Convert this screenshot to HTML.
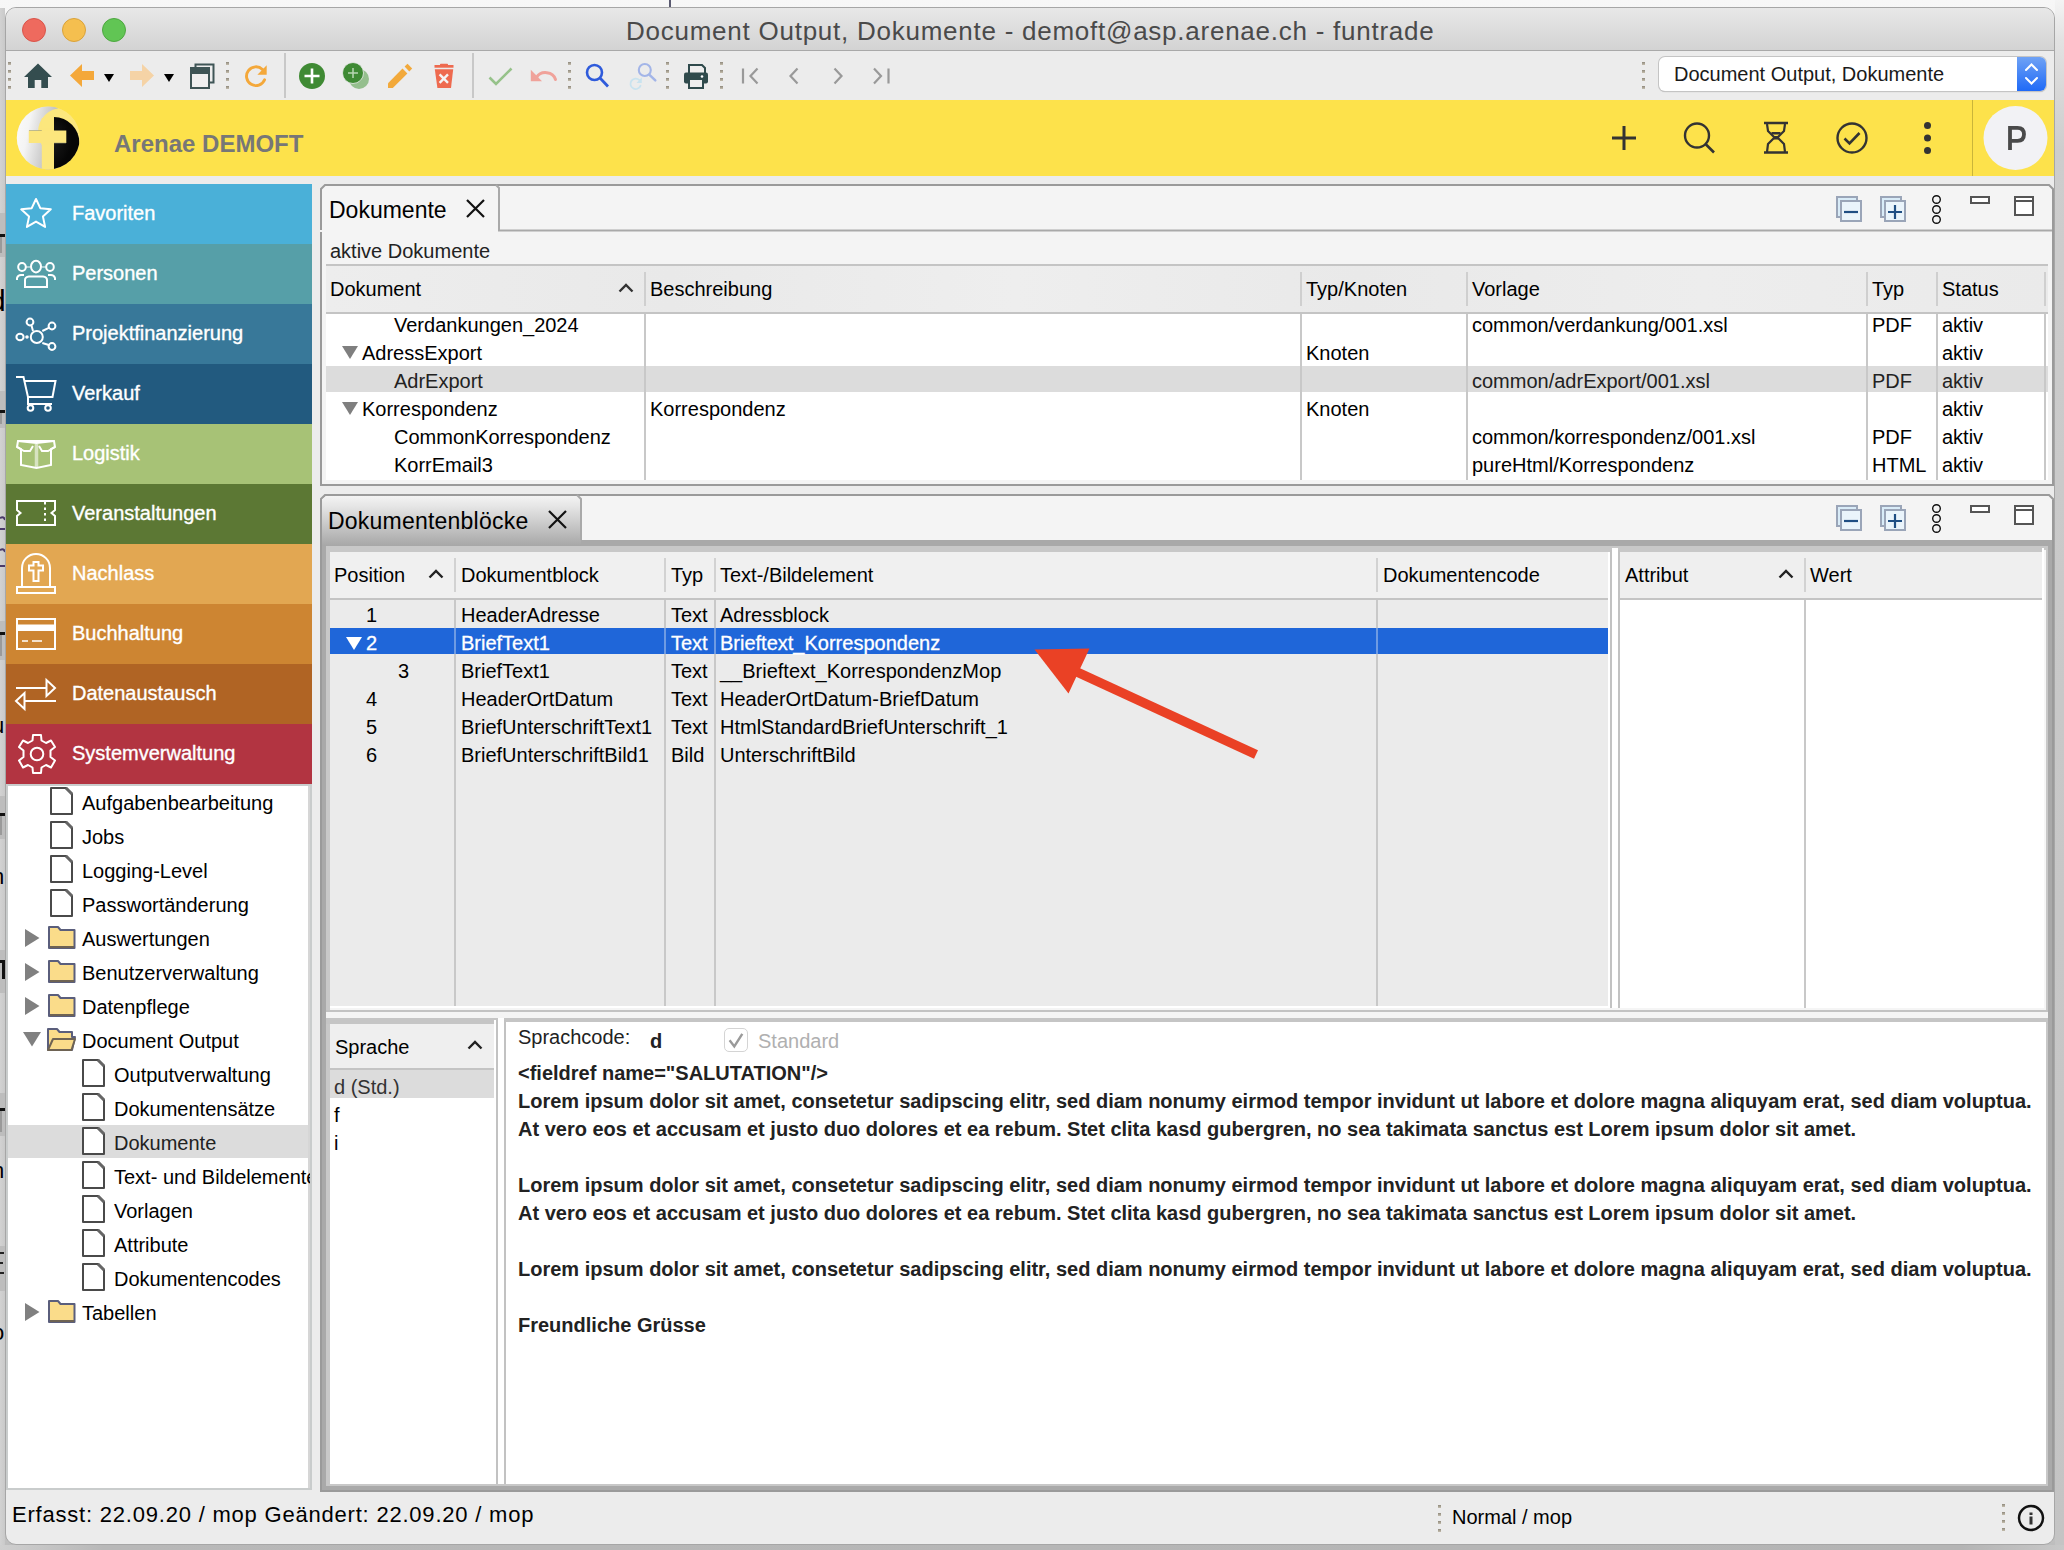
<!DOCTYPE html>
<html><head><meta charset="utf-8">
<style>
*{box-sizing:border-box;margin:0;padding:0}
html,body{width:2064px;height:1550px;overflow:hidden}
body{position:relative;background:#f6f6f6;font-family:"Liberation Sans",sans-serif;font-size:20px;color:#000}
.a{position:absolute}
.t{position:absolute;white-space:nowrap;line-height:1}
#desk{left:0;top:0;width:2064px;height:1550px;background:linear-gradient(180deg,#f7f7f7 0,#f3f3f3 50px,#d6d6d6 800px,#cdcdcd 1500px,#bcbcbc 1550px)}
#win{left:5px;top:7px;width:2050px;height:1538px;border:1px solid #a6a6a6;border-radius:11px;background:#ececec;overflow:hidden}
#titlebar{left:0;top:0;width:2048px;height:43px;background:linear-gradient(#e8e8e8,#d3d3d3);border-bottom:1px solid #a9a9a9}
.light{top:10px;width:24px;height:24px;border-radius:50%}
.grip{width:3px;height:28px;background:repeating-linear-gradient(#8f897c 0,#c4bdad 3px,transparent 3px,transparent 8px)}
.nav{left:0;width:306px;height:60px;color:#fff;font-size:20px}
.nav .t{left:66px;top:19px;-webkit-text-stroke:0.35px #fff}
.nav svg{position:absolute;left:8px;top:8px}
</style></head><body>
<div id="desk" class="a"></div>
<div class="a" style="left:669px;top:0;width:2px;height:7px;background:#5a5a70"></div>
<div class="a" style="left:0;top:0;width:5px;height:1550px;overflow:hidden"><div class="a" style="left:0px;top:8px;width:5px;height:1537px;background:linear-gradient(90deg,#d2d2d2,#c9c9c9)"></div><div class="a" style="left:0px;top:213px;width:5px;height:44px;background:#bdbdbd"></div><div class="a" style="left:0px;top:234px;width:5px;height:3px;background:#111"></div><div class="a" style="left:0px;top:237px;width:2px;height:16px;background:#9a9a9a"></div><div class="a" style="left:0px;top:391px;width:5px;height:37px;background:#bdbdbd"></div><div class="a" style="left:0px;top:410px;width:5px;height:3px;background:#111"></div><div class="a" style="left:0px;top:413px;width:2px;height:11px;background:#9a9a9a"></div><div class="a" style="left:0px;top:621px;width:5px;height:39px;background:#bdbdbd"></div><div class="a" style="left:0px;top:632px;width:5px;height:3px;background:#111"></div><div class="a" style="left:0px;top:635px;width:2px;height:21px;background:#9a9a9a"></div><div class="a" style="left:0px;top:796px;width:5px;height:43px;background:#bdbdbd"></div><div class="a" style="left:0px;top:813px;width:5px;height:3px;background:#111"></div><div class="a" style="left:0px;top:816px;width:2px;height:19px;background:#9a9a9a"></div><div class="a" style="left:0px;top:1093px;width:5px;height:43px;background:#bdbdbd"></div><div class="a" style="left:0px;top:1108px;width:5px;height:3px;background:#111"></div><div class="a" style="left:0px;top:1111px;width:2px;height:21px;background:#9a9a9a"></div><div class="a" style="left:0px;top:950px;width:5px;height:43px;background:#bdbdbd"></div><div class="a" style="left:0px;top:960px;width:5px;height:3px;background:#111"></div><div class="a" style="left:2px;top:963px;width:3px;height:16px;background:#111"></div><div class="a" style="left:0px;top:1246px;width:5px;height:45px;background:#bdbdbd"></div><div class="a" style="left:0px;top:1252px;width:4px;height:2px;background:#222"></div><div class="a" style="left:0px;top:1262px;width:3px;height:2px;background:#222"></div><div class="a" style="left:0px;top:1272px;width:4px;height:2px;background:#222"></div><div class="t" style="left:-11px;top:286px;font-size:30px;color:#000">d</div><div class="t" style="left:-8px;top:715px;font-size:22px;color:#000">u</div><div class="t" style="left:-8px;top:866px;font-size:22px;color:#000">n</div><div class="t" style="left:-8px;top:1160px;font-size:22px;color:#000">n</div><div class="t" style="left:-8px;top:1322px;font-size:22px;color:#000">o</div><div class="a" style="left:0px;top:528px;width:5px;height:2px;background:#4a3a6a"></div><div class="a" style="left:0px;top:565px;width:5px;height:2px;background:#4a3a6a"></div><svg class="a" style="left:0;top:510px" width="6" height="50"><path d="M0,8 Q4,6 5,10 M0,40 Q4,38 5,42" fill="none" stroke="#4a3a6a" stroke-width="2"/></svg></div>
<div class="a" style="left:2055px;top:0;width:9px;height:1550px;background:linear-gradient(180deg,#f4f4f4 0,#e2e2e2 40px,#cdcdcd 150px,#c8c8c8 700px,#c4c4c4 1550px)"></div>
<div class="a" style="left:0;top:1545px;width:2064px;height:5px;background:linear-gradient(90deg,#cfcfcf,#b8b8b8 5%,#b4b4b4 95%,#c8c8c8)"></div>
<div id="win" class="a">
  <div id="titlebar" class="a">
    <div class="a light" style="left:16px;background:#ee6a5e;border:1px solid #d9544a"></div>
    <div class="a light" style="left:56px;background:#f5bf4f;border:1px solid #d9a23a"></div>
    <div class="a light" style="left:96px;background:#61c554;border:1px solid #4ea740"></div>
    <div class="t" style="left:620px;top:10px;font-size:26px;letter-spacing:0.75px;color:#4a4a4a">Document Output, Dokumente - demoft@asp.arenae.ch - funtrade</div>
  </div>
</div>
<!-- TOOLBAR -->
<div class="a grip" style="left:8px;top:62px"></div>
<svg class="a" style="left:0;top:51px" width="920" height="49" viewBox="0 51 920 49">
  <!-- home -->
  <path d="M38,63.5 L52,77 L48,77 L48,88 L41.3,88 L41.3,80 L34.7,80 L34.7,88 L28,88 L28,77 L24,77 Z" fill="#344d4f"/>
  <!-- back arrow -->
  <path d="M70,75.5 L82,64 L82,71 L94,71 L94,80 L82,80 L82,87 Z" fill="#f4a83a"/>
  <path d="M104,74 L114,74 L109,82 Z" fill="#000"/>
  <!-- forward arrow -->
  <path d="M154,75.5 L142,64 L142,71 L130,71 L130,80 L142,80 L142,87 Z" fill="#f5d3a6"/>
  <path d="M164,74 L174,74 L169,82 Z" fill="#000"/>
  <!-- windows -->
  <rect x="195.5" y="64.5" width="18" height="18" fill="#eee" stroke="#3f5556" stroke-width="2"/>
  <rect x="191" y="68" width="18" height="20" fill="#f0f0f0" stroke="#3f5556" stroke-width="2"/>
  <rect x="190" y="68" width="20" height="6" fill="#3f5556"/>
  <!-- refresh -->
  <path d="M264.6,79.8 A9.4,9.4 0 1 1 262.5,69.5" fill="none" stroke="#f4a83a" stroke-width="2.9" stroke-linecap="round"/>
  <path d="M266.7,65.2 L266.7,74.8 L257.4,74.8 Z" fill="#f4a83a"/>
  <!-- separator -->
  <rect x="284" y="53" width="2" height="45" fill="#c8c8c8"/>
  <!-- plus circle -->
  <circle cx="312" cy="76" r="13" fill="#3f8a34"/>
  <path d="M312,68.5 V83.5 M304.5,76 H319.5" stroke="#fff" stroke-width="2.6"/>
  <!-- dup plus -->
  <circle cx="359" cy="79" r="10" fill="#95bf8e"/>
  <circle cx="353" cy="73" r="10.5" fill="#3f8a34" stroke="#eee" stroke-width="0.8"/>
  <path d="M353,68 V78 M348,73 H358" stroke="#b9d6b3" stroke-width="1.5"/>
  <!-- pencil -->
  <path d="M388,88 L388,83.3 L402.5,68.6 L407.4,73.4 L392.8,88 Z" fill="#f2a93b"/>
  <path d="M404.6,66.6 L407.5,63.7 L412.2,68.4 L409.3,71.4 Z" fill="#f2a93b"/>
  <!-- trash -->
  <rect x="434.5" y="65" width="19" height="2.7" fill="#ee6a4f"/>
  <rect x="440" y="63.8" width="8" height="2" rx="0.8" fill="#ee6a4f"/>
  <path d="M434.8,69.3 L453.2,69.3 L451,88 L437.4,88 Z" fill="#ee6a4f"/>
  <path d="M439.6,74.4 L448,82.8 M448,74.4 L439.6,82.8" stroke="#f4f4f4" stroke-width="2.4"/>
  <!-- separator -->
  <rect x="472" y="53" width="2" height="45" fill="#c8c8c8"/>
  <!-- check -->
  <path d="M489.5,77.5 L496,84 L511.5,68.5" fill="none" stroke="#96c28a" stroke-width="2.6"/>
  <!-- undo -->
  <path d="M536.5,77.5 A10.2,9 0 0 1 555.5,79.5" fill="none" stroke="#f0a29a" stroke-width="3" stroke-linecap="round"/>
  <path d="M530.8,69.8 L530.8,81.2 L542,81.2 Z" fill="#f0a29a"/>
  <!-- search blue -->
  <circle cx="594.5" cy="72.5" r="7.5" fill="none" stroke="#2f5bdb" stroke-width="2.6"/>
  <path d="M600,78 L608,86.5" stroke="#2f5bdb" stroke-width="2.8"/>
  <!-- search light -->
  <circle cx="644.8" cy="70" r="6" fill="none" stroke="#a3b5e8" stroke-width="2.1"/>
  <path d="M649.5,74.8 L655.3,80.3" stroke="#a3b5e8" stroke-width="2.5" stroke-linecap="round"/>
  <path d="M640.5,85.8 A5.2,5.2 0 1 1 639.4,80.2" fill="none" stroke="#c9e3ef" stroke-width="1.8" stroke-linecap="round"/>
  <path d="M641.8,77.6 L641.8,83 L636.5,83 Z" fill="#c9e3ef"/>
  <!-- printer -->
  <path d="M689,65 L702,65 L705,68 L705,74 L689,74 Z" fill="#eee" stroke="#2f4a4c" stroke-width="2"/>
  <rect x="684" y="72.5" width="24" height="11" rx="2" fill="#2f4a4c"/>
  <rect x="689" y="79" width="14" height="9" fill="#eee" stroke="#2f4a4c" stroke-width="2"/>
  <circle cx="702" cy="76.5" r="1.3" fill="#fff"/>
  <!-- nav arrows -->
  <g stroke="#999" stroke-width="2.2" fill="none">
    <path d="M743,68.5 V83.5"/><path d="M757.5,68.5 L750.5,76 L757.5,83.5"/>
    <path d="M797.5,68.5 L790.5,76 L797.5,83.5"/>
    <path d="M834.5,68.5 L841.5,76 L834.5,83.5"/>
    <path d="M874,68.5 L881,76 L874,83.5"/><path d="M888.5,68.5 V83.5"/>
  </g>
</svg>
<div class="a grip" style="left:226px;top:62px"></div>
<div class="a grip" style="left:568px;top:62px"></div>
<div class="a grip" style="left:666px;top:62px"></div>
<div class="a grip" style="left:720px;top:62px"></div>
<div class="a grip" style="left:1642px;top:62px"></div>
<!-- dropdown -->
<div class="a" style="left:1659px;top:57px;width:387px;height:34px;border-radius:6px;background:#fff;box-shadow:0 0 0 1px #c4c4c4, 0 1px 1px #b0b0b0;overflow:hidden">
  <div class="t" style="left:15px;top:7px;font-size:20px;color:#1a1a1a">Document Output, Dokumente</div>
  <div class="a" style="right:0;top:0;width:29px;height:34px;background:linear-gradient(#6fa2f5,#1f6af7)">
    <svg width="29" height="34"><path d="M9,13 L14.5,7.5 L20,13 M9,21 L14.5,26.5 L20,21" fill="none" stroke="#fff" stroke-width="2" stroke-linecap="round"/></svg>
  </div>
</div>
<!-- YELLOW HEADER -->
<div class="a" style="left:6px;top:100px;width:2048px;height:76px;background:#fde24b"></div>
<svg class="a" style="left:6px;top:100px" width="90" height="76" viewBox="6 100 90 76">
  <defs>
    <clipPath id="lc"><circle cx="48.3" cy="138" r="31.5"/></clipPath>
    <clipPath id="rc"><rect x="54" y="100" width="40" height="76"/></clipPath>
    <linearGradient id="wg" x1="0" x2="1" y1="0" y2="0.3"><stop offset="0" stop-color="#ffffff"/><stop offset="0.45" stop-color="#f4f4f4"/><stop offset="1" stop-color="#b8b8b8"/></linearGradient>
    <radialGradient id="bg2" cx="0.3" cy="0.45" r="0.55"><stop offset="0" stop-color="#666"/><stop offset="0.45" stop-color="#151515"/><stop offset="1" stop-color="#060606"/></radialGradient>
  </defs>
  <g clip-path="url(#lc)">
    <rect x="10" y="100" width="80" height="76" fill="#fce77d"/>
    <path d="M10,100 H58 V176 H10 Z" fill="url(#wg)"/>
    <circle cx="62" cy="132" r="24" fill="#fce77d"/>
    <g clip-path="url(#rc)"><ellipse cx="54" cy="143.5" rx="25.5" ry="26.5" fill="url(#bg2)"/></g>
    <rect x="41.8" y="118" width="12.2" height="58" fill="#fce77d"/>
    <rect x="28.8" y="130.5" width="37.5" height="12.5" fill="#fce77d"/>
    <path d="M29,130.5 H41.8 M54,143 H66" stroke="#9a9a7a" stroke-width="1" opacity="0.6"/>
  </g>
</svg>
<div class="t" style="left:114px;top:132px;font-size:24px;font-weight:bold;color:#777">Arenae DEMOFT</div>
<svg class="a" style="left:1590px;top:100px" width="464" height="76" viewBox="1590 100 464 76">
  <path d="M1624,126 V150 M1612,138 H1636" stroke="#333" stroke-width="3"/>
  <circle cx="1697" cy="135.5" r="12" fill="none" stroke="#333" stroke-width="2.4"/>
  <path d="M1705.5,144 L1714,152.5" stroke="#333" stroke-width="2.6"/>
  <path d="M1764,123 H1788 M1764,152.5 H1788" stroke="#333" stroke-width="2.6"/>
  <path d="M1767,124 L1768,131 L1774.5,137.5 L1768,144 L1767,152 M1785,124 L1784,131 L1777.5,137.5 L1784,144 L1785,152" fill="none" stroke="#333" stroke-width="2.2"/>
  <path d="M1771.5,132 H1780.5 V134.5 H1771.5 Z M1774,136 H1778 V139.5 H1774 Z" fill="#333"/>
  <circle cx="1852" cy="138" r="14.5" fill="none" stroke="#333" stroke-width="2.4"/>
  <path d="M1844.5,138.5 L1849.5,143.5 L1859.5,133" fill="none" stroke="#333" stroke-width="2.6"/>
  <circle cx="1927.5" cy="125.5" r="3.5" fill="#333"/>
  <circle cx="1927.5" cy="138" r="3.5" fill="#333"/>
  <circle cx="1927.5" cy="150.5" r="3.5" fill="#333"/>
  <rect x="1972" y="100" width="1" height="76" fill="#c9b53a"/>
  <circle cx="2015.5" cy="138" r="32" fill="#f2f2f5"/>
</svg>
<svg class="a" style="left:2000px;top:120px" width="34" height="36" viewBox="2000 120 34 36"><path d="M2010,150 V127.8 H2017.5 Q2024,127.8 2024,134.3 Q2024,140.8 2017.5,140.8 H2010" fill="none" stroke="#4a4a4a" stroke-width="3.8"/></svg>
<!-- NAV -->
<div class="a nav" style="top:184px;left:6px;background:#4ab0d8"><div class="t">Favoriten</div></div>
<div class="a nav" style="top:244px;left:6px;background:#569fa8"><div class="t">Personen</div></div>
<div class="a nav" style="top:304px;left:6px;background:#387899"><div class="t">Projektfinanzierung</div></div>
<div class="a nav" style="top:364px;left:6px;background:#225a7f"><div class="t">Verkauf</div></div>
<div class="a nav" style="top:424px;left:6px;background:#a7c276"><div class="t">Logistik</div></div>
<div class="a nav" style="top:484px;left:6px;background:#5c7834"><div class="t">Veranstaltungen</div></div>
<div class="a nav" style="top:544px;left:6px;background:#e2a752"><div class="t">Nachlass</div></div>
<div class="a nav" style="top:604px;left:6px;background:#cd8532"><div class="t">Buchhaltung</div></div>
<div class="a nav" style="top:664px;left:6px;background:#b06424"><div class="t">Datenaustausch</div></div>
<div class="a nav" style="top:724px;left:6px;background:#b23441"><div class="t">Systemverwaltung</div></div>
<svg class="a" style="left:0;top:184px" width="70" height="600" viewBox="0 184 70 600">
 <g fill="none" stroke="#fff" stroke-width="2">
  <!-- star -->
  <path d="M36,199 L40.3,208.2 L50.8,209.3 L42.9,216.4 L45.1,226.9 L36,221.6 L26.9,226.9 L29.1,216.4 L21.2,209.3 L31.7,208.2 Z" stroke-linejoin="round"/>
  <!-- people -->
  <ellipse cx="36" cy="266.6" rx="5" ry="5.8"/>
  <ellipse cx="22" cy="267" rx="3.8" ry="4"/>
  <ellipse cx="50" cy="267" rx="3.8" ry="4"/>
  <path d="M25,287 V280 Q25,277 29,276.5 H43 Q47,277 47,280 V287 Z"/>
  <path d="M17,280 V278 Q18,275 21,275 H24 M55,280 V278 Q54,275 51,275 H48"/>
  <path d="M26,267 H30.5 M41.5,267 H46" stroke-opacity="0.5"/>
  <!-- network -->
  <circle cx="36.8" cy="337" r="6"/>
  <circle cx="30" cy="322" r="3.4"/>
  <circle cx="52" cy="326" r="3.4"/>
  <circle cx="52" cy="346.5" r="3.4"/>
  <ellipse cx="20" cy="337" rx="3.6" ry="3.2"/>
  <path d="M31.5,325.5 L33,331 M48.8,327.8 L42.3,331 M42.3,343 L48.8,345" />
  <circle cx="27" cy="337" r="0.8" fill="#fff"/>
  <!-- cart -->
  <path d="M16,377 H23.5 L28,397 V404 H52"/>
  <path d="M25,381 H55.5 L52.5,397 H28"/>
  <circle cx="30.5" cy="408" r="2.8"/>
  <circle cx="48" cy="408" r="2.8"/>
  <!-- box -->
  <path d="M18,441 H54 L55,447 L51,449 V465 L36.5,468 L21,465 V449 L17,447 Z"/>
  <path d="M18,441 L36.5,443 L54,441 M17,447 L24,451 L30,451 L33,446 M55,447 L48,451 L42,451 L39,446"/>
  <path d="M36.5,444 V468" stroke-width="3.5" stroke-opacity="0.55"/>
  <!-- ticket -->
  <path d="M17,501 H55 V510 L51.5,513 L55,516 V525 H17 V516 L20.5,513 L17,510 Z"/>
  <path d="M45,502 V525" stroke-dasharray="2.5 3"/>
  <!-- gravestone -->
  <path d="M22,586 V568 A14,14 0 0 1 50,568 V586"/>
  <rect x="17" y="587" width="38" height="6"/>
  <path d="M33.5,581 V570.5 H29 V565.5 H33.5 V562 H38.5 V565.5 H43 V570.5 H38.5 V581 Z"/>
  <!-- card -->
  <rect x="17" y="619" width="38" height="30"/>
  <rect x="17" y="625.5" width="38" height="4.5" fill="#fff"/>
  <path d="M22,641 H28 M32,641 H42" stroke-width="1.5"/>
  <!-- exchange -->
  <path d="M16,688 H46 M25,701 H56"/>
  <path d="M46.5,680 V696 L55,688 Z M24.5,693 V709 L16,701 Z"/>
  <!-- gear -->
  <path d="M33,735 H41 L41.5,740.5 L46,743 L51,740.5 L55,747 L50.5,750.5 V757 L55,760.5 L51,767.5 L46,765 L41.5,767.5 L41,773 H33 L32.5,767.5 L28,765 L23,767.5 L19,760.5 L23.5,757 V750.5 L19,747 L23,740.5 L28,743 L32.5,740.5 Z" stroke-linejoin="round"/>
  <circle cx="37" cy="754" r="6.3"/>
 </g>
</svg>
<!-- TREE -->
<div class="a" style="left:6px;top:784px;width:306px;height:706px;background:#fff;border:2px solid #c9cccc"></div>
<div class="a" style="left:8px;top:1125px;width:302px;height:33px;background:#dcdcdc"></div>
<div class="a" style="left:308px;top:786px;width:2px;height:702px;background:#d6d6d6"></div>
<svg class="a" style="left:0;top:784px" width="320" height="560" viewBox="0 784 320 560">
<path d="M51,788 H66 L72,794 V814 H51 Z" fill="#fff" stroke="#4a4a4a" stroke-width="2" stroke-linejoin="round"/>
<path d="M66,788 L72,794" stroke="#666" stroke-width="3"/>
<path d="M51,822 H66 L72,828 V848 H51 Z" fill="#fff" stroke="#4a4a4a" stroke-width="2" stroke-linejoin="round"/>
<path d="M66,822 L72,828" stroke="#666" stroke-width="3"/>
<path d="M51,856 H66 L72,862 V882 H51 Z" fill="#fff" stroke="#4a4a4a" stroke-width="2" stroke-linejoin="round"/>
<path d="M66,856 L72,862" stroke="#666" stroke-width="3"/>
<path d="M51,890 H66 L72,896 V916 H51 Z" fill="#fff" stroke="#4a4a4a" stroke-width="2" stroke-linejoin="round"/>
<path d="M66,890 L72,896" stroke="#666" stroke-width="3"/>
<path d="M25,929 L39.5,938 L25,947 Z" fill="#808080"/>
<path d="M49,927 H58 L60.5,930 H74.5 V948 H49 Z" fill="#fadc8a" stroke="#5a5e7c" stroke-width="2" stroke-linejoin="round"/>
<path d="M50,947 H74" stroke="#6e6353" stroke-width="2"/>
<path d="M25,963 L39.5,972 L25,981 Z" fill="#808080"/>
<path d="M49,961 H58 L60.5,964 H74.5 V982 H49 Z" fill="#fadc8a" stroke="#5a5e7c" stroke-width="2" stroke-linejoin="round"/>
<path d="M50,981 H74" stroke="#6e6353" stroke-width="2"/>
<path d="M25,997 L39.5,1006 L25,1015 Z" fill="#808080"/>
<path d="M49,995 H58 L60.5,998 H74.5 V1016 H49 Z" fill="#fadc8a" stroke="#5a5e7c" stroke-width="2" stroke-linejoin="round"/>
<path d="M50,1015 H74" stroke="#6e6353" stroke-width="2"/>
<path d="M23,1032 L41,1032 L32,1046.5 Z" fill="#808080"/>
<path d="M48,1029 H57 L59.5,1032 H72 V1037 H75 L72,1050 H48 Z" fill="#fadc8a" stroke="#5a5e7c" stroke-width="2" stroke-linejoin="round"/>
<path d="M53,1039 H75 L71.5,1050 H48 Z" fill="#fadc8a" stroke="#6e6353" stroke-width="2" stroke-linejoin="round"/>
<path d="M83,1060 H98 L104,1066 V1086 H83 Z" fill="#fff" stroke="#4a4a4a" stroke-width="2" stroke-linejoin="round"/>
<path d="M98,1060 L104,1066" stroke="#666" stroke-width="3"/>
<path d="M83,1094 H98 L104,1100 V1120 H83 Z" fill="#fff" stroke="#4a4a4a" stroke-width="2" stroke-linejoin="round"/>
<path d="M98,1094 L104,1100" stroke="#666" stroke-width="3"/>
<path d="M83,1128 H98 L104,1134 V1154 H83 Z" fill="#fff" stroke="#4a4a4a" stroke-width="2" stroke-linejoin="round"/>
<path d="M98,1128 L104,1134" stroke="#666" stroke-width="3"/>
<path d="M83,1162 H98 L104,1168 V1188 H83 Z" fill="#fff" stroke="#4a4a4a" stroke-width="2" stroke-linejoin="round"/>
<path d="M98,1162 L104,1168" stroke="#666" stroke-width="3"/>
<path d="M83,1196 H98 L104,1202 V1222 H83 Z" fill="#fff" stroke="#4a4a4a" stroke-width="2" stroke-linejoin="round"/>
<path d="M98,1196 L104,1202" stroke="#666" stroke-width="3"/>
<path d="M83,1230 H98 L104,1236 V1256 H83 Z" fill="#fff" stroke="#4a4a4a" stroke-width="2" stroke-linejoin="round"/>
<path d="M98,1230 L104,1236" stroke="#666" stroke-width="3"/>
<path d="M83,1264 H98 L104,1270 V1290 H83 Z" fill="#fff" stroke="#4a4a4a" stroke-width="2" stroke-linejoin="round"/>
<path d="M98,1264 L104,1270" stroke="#666" stroke-width="3"/>
<path d="M25,1303 L39.5,1312 L25,1321 Z" fill="#808080"/>
<path d="M49,1301 H58 L60.5,1304 H74.5 V1322 H49 Z" fill="#fadc8a" stroke="#5a5e7c" stroke-width="2" stroke-linejoin="round"/>
<path d="M50,1321 H74" stroke="#6e6353" stroke-width="2"/>
</svg>
<div class="a" style="left:8px;top:786px;width:302px;height:702px;overflow:hidden">
<div class="t" style="left:74px;top:7px;color:#000">Aufgabenbearbeitung</div>
<div class="t" style="left:74px;top:41px;color:#000">Jobs</div>
<div class="t" style="left:74px;top:75px;color:#000">Logging-Level</div>
<div class="t" style="left:74px;top:109px;color:#000">Passwortänderung</div>
<div class="t" style="left:74px;top:143px;color:#000">Auswertungen</div>
<div class="t" style="left:74px;top:177px;color:#000">Benutzerverwaltung</div>
<div class="t" style="left:74px;top:211px;color:#000">Datenpflege</div>
<div class="t" style="left:74px;top:245px;color:#000">Document Output</div>
<div class="t" style="left:106px;top:279px;color:#000">Outputverwaltung</div>
<div class="t" style="left:106px;top:313px;color:#000">Dokumentensätze</div>
<div class="t" style="left:106px;top:347px;color:#222">Dokumente</div>
<div class="t" style="left:106px;top:381px;color:#000">Text- und Bildelemente</div>
<div class="t" style="left:106px;top:415px;color:#000">Vorlagen</div>
<div class="t" style="left:106px;top:449px;color:#000">Attribute</div>
<div class="t" style="left:106px;top:483px;color:#000">Dokumentencodes</div>
<div class="t" style="left:74px;top:517px;color:#000">Tabellen</div></div>
<!-- MAIN AREA -->
<svg class="a" style="left:318px;top:182px" width="1740" height="310" viewBox="318 182 1740 310">
<path d="M321,485 V190 L325,186 H497 L500,189 V230.5 H2049 L2053,226 V485 Z" fill="#f4f4f4"/>
<path d="M321,485 V189 L325,185 H2049 L2053,189 V485 Z" fill="#f4f4f4" stroke="#9a9a9a" stroke-width="2"/>
<rect x="320" y="230" width="2" height="2" fill="#f4f4f4"/>
<path d="M496,185 L499,188 V230.5 H2052" fill="none" stroke="#a9a9a9" stroke-width="2"/>
</svg>
<div class="t" style="left:329px;top:199px;color:#000;font-size:23px">Dokumente</div>
<svg class="a" style="left:465px;top:198px" width="22" height="22"><path d="M2,2 L19,19 M19,2 L2,19" stroke="#111" stroke-width="2.2"/></svg>
<svg class="a" style="left:1830px;top:186px" width="220" height="40" viewBox="1830 186 220 40">
<rect x="1837" y="197" width="20" height="20" fill="#d9ecf8" stroke="#9aa5b8" stroke-width="2"/>
<rect x="1841" y="201" width="20" height="20" fill="#eaf4fb" stroke="#9aa5b8" stroke-width="2"/>
<path d="M1844,212 H1858" stroke="#1f4e83" stroke-width="2.2"/>
<rect x="1881" y="197" width="20" height="20" fill="#d9ecf8" stroke="#9aa5b8" stroke-width="2"/>
<rect x="1885" y="201" width="20" height="20" fill="#eaf4fb" stroke="#9aa5b8" stroke-width="2"/>
<path d="M1888,212 H1902 M1895,205 V219" stroke="#1f4e83" stroke-width="2.2"/>
<circle cx="1936.5" cy="199.5" r="3.8" fill="none" stroke="#111" stroke-width="1.4"/>
<circle cx="1936.5" cy="209.5" r="3.8" fill="none" stroke="#111" stroke-width="1.4"/>
<circle cx="1936.5" cy="219.5" r="3.8" fill="none" stroke="#111" stroke-width="1.4"/>
<rect x="1971" y="197" width="18" height="6" fill="#fff" stroke="#555" stroke-width="2"/>
<rect x="2015" y="197" width="18" height="18" fill="#fff" stroke="#555" stroke-width="2"/>
<rect x="2015" y="200" width="18" height="2" fill="#555"/>
</svg>
<div class="t" style="left:330px;top:241px;color:#222;">aktive Dokumente</div>
<div class="a" style="left:326px;top:264px;width:1722px;height:2px;background:#c4c4c4;"></div>
<div class="a" style="left:326px;top:266px;width:1722px;height:46px;background:linear-gradient(90deg,#ededed,#e9e9e9 20%,#eeeeee 40%,#e9e9e9 60%,#ededed 80%,#eaeaea);"></div>
<div class="a" style="left:326px;top:312px;width:1722px;height:2px;background:#c4c4c4;"></div>
<div class="a" style="left:326px;top:314px;width:1722px;height:166px;background:#fff;"></div>
<div class="a" style="left:326px;top:366px;width:1722px;height:26px;background:#dcdcdc;"></div>
<div class="a" style="left:644px;top:272px;width:2px;height:34px;background:#cfcfcf;"></div>
<div class="a" style="left:644px;top:314px;width:2px;height:166px;background:#c8c8c8;"></div>
<div class="a" style="left:1300px;top:272px;width:2px;height:34px;background:#cfcfcf;"></div>
<div class="a" style="left:1300px;top:314px;width:2px;height:166px;background:#c8c8c8;"></div>
<div class="a" style="left:1466px;top:272px;width:2px;height:34px;background:#cfcfcf;"></div>
<div class="a" style="left:1466px;top:314px;width:2px;height:166px;background:#c8c8c8;"></div>
<div class="a" style="left:1866px;top:272px;width:2px;height:34px;background:#cfcfcf;"></div>
<div class="a" style="left:1866px;top:314px;width:2px;height:166px;background:#c8c8c8;"></div>
<div class="a" style="left:1936px;top:272px;width:2px;height:34px;background:#cfcfcf;"></div>
<div class="a" style="left:1936px;top:314px;width:2px;height:166px;background:#c8c8c8;"></div>
<div class="a" style="left:2044px;top:272px;width:2px;height:34px;background:#cfcfcf;"></div>
<div class="a" style="left:2044px;top:314px;width:2px;height:166px;background:#c8c8c8;"></div>
<div class="t" style="left:330px;top:279px;color:#000;">Dokument</div>
<div class="t" style="left:650px;top:279px;color:#000;">Beschreibung</div>
<div class="t" style="left:1306px;top:279px;color:#000;">Typ/Knoten</div>
<div class="t" style="left:1472px;top:279px;color:#000;">Vorlage</div>
<div class="t" style="left:1872px;top:279px;color:#000;">Typ</div>
<div class="t" style="left:1942px;top:279px;color:#000;">Status</div>
<svg class="a" style="left:617px;top:282px" width="18" height="12"><path d="M2.5,9.5 L9,3 L15.5,9.5" fill="none" stroke="#333" stroke-width="2.4"/></svg>
<div class="a" style="left:326px;top:314px;width:318px;height:166px;overflow:hidden">
<div class="t" style="left:68px;top:1px;color:#000;">Verdankungen_2024</div>
<svg class="a" style="left:15px;top:31px" width="18" height="14"><path d="M1,1 H17 L9,14 Z" fill="#7f7f7f"/></svg>
<div class="t" style="left:36px;top:29px;color:#000;">AdressExport</div>
<div class="t" style="left:68px;top:57px;color:#222;">AdrExport</div>
<svg class="a" style="left:15px;top:87px" width="18" height="14"><path d="M1,1 H17 L9,14 Z" fill="#7f7f7f"/></svg>
<div class="t" style="left:36px;top:85px;color:#000;">Korrespondenz</div>
<div class="t" style="left:68px;top:113px;color:#000;">CommonKorrespondenz</div>
<div class="t" style="left:68px;top:141px;color:#000;">KorrEmail3</div>
</div>
<div class="t" style="left:1472px;top:315px;color:#000;">common/verdankung/001.xsl</div>
<div class="t" style="left:1872px;top:315px;color:#000;">PDF</div>
<div class="t" style="left:1942px;top:315px;color:#000;">aktiv</div>
<div class="t" style="left:1306px;top:343px;color:#000;">Knoten</div>
<div class="t" style="left:1942px;top:343px;color:#000;">aktiv</div>
<div class="t" style="left:1472px;top:371px;color:#222;">common/adrExport/001.xsl</div>
<div class="t" style="left:1872px;top:371px;color:#222;">PDF</div>
<div class="t" style="left:1942px;top:371px;color:#222;">aktiv</div>
<div class="t" style="left:650px;top:399px;color:#000;">Korrespondenz</div>
<div class="t" style="left:1306px;top:399px;color:#000;">Knoten</div>
<div class="t" style="left:1942px;top:399px;color:#000;">aktiv</div>
<div class="t" style="left:1472px;top:427px;color:#000;">common/korrespondenz/001.xsl</div>
<div class="t" style="left:1872px;top:427px;color:#000;">PDF</div>
<div class="t" style="left:1942px;top:427px;color:#000;">aktiv</div>
<div class="t" style="left:1472px;top:455px;color:#000;">pureHtml/Korrespondenz</div>
<div class="t" style="left:1872px;top:455px;color:#000;">HTML</div>
<div class="t" style="left:1942px;top:455px;color:#000;">aktiv</div>
<svg class="a" style="left:318px;top:490px" width="1740" height="1010" viewBox="318 490 1740 1010">
<defs><linearGradient id="tabg" x1="0" y1="0" x2="0" y2="1"><stop offset="0" stop-color="#f3f3f3"/><stop offset="0.2" stop-color="#e6e6e6"/><stop offset="1" stop-color="#a7a7a7"/></linearGradient></defs>
<path d="M321,1491 V499 L325,495 H2049 L2053,499 V1491 Z" fill="#a9a9a9" stroke="#9a9a9a" stroke-width="2"/>
<path d="M322,540 V499.5 L326,496 H2048.5 L2052,499.5 V540 Z" fill="#f4f4f4"/>
<path d="M322,546 V499.5 L326,496 H578 L581,499 V546 Z" fill="url(#tabg)"/>
<path d="M577,495 L581,499 V540" fill="none" stroke="#a9a9a9" stroke-width="2"/>
</svg>
<div class="t" style="left:328px;top:510px;color:#000;font-size:23px;letter-spacing:0.22px">Dokumentenblöcke</div>
<svg class="a" style="left:547px;top:509px" width="22" height="22"><path d="M2,2 L19,19 M19,2 L2,19" stroke="#111" stroke-width="2.2"/></svg>
<svg class="a" style="left:1830px;top:495px" width="220" height="40" viewBox="1830 495 220 40">
<rect x="1837" y="506" width="20" height="20" fill="#d9ecf8" stroke="#9aa5b8" stroke-width="2"/>
<rect x="1841" y="510" width="20" height="20" fill="#eaf4fb" stroke="#9aa5b8" stroke-width="2"/>
<path d="M1844,521 H1858" stroke="#1f4e83" stroke-width="2.2"/>
<rect x="1881" y="506" width="20" height="20" fill="#d9ecf8" stroke="#9aa5b8" stroke-width="2"/>
<rect x="1885" y="510" width="20" height="20" fill="#eaf4fb" stroke="#9aa5b8" stroke-width="2"/>
<path d="M1888,521 H1902 M1895,514 V528" stroke="#1f4e83" stroke-width="2.2"/>
<circle cx="1936.5" cy="508.5" r="3.8" fill="none" stroke="#111" stroke-width="1.4"/>
<circle cx="1936.5" cy="518.5" r="3.8" fill="none" stroke="#111" stroke-width="1.4"/>
<circle cx="1936.5" cy="528.5" r="3.8" fill="none" stroke="#111" stroke-width="1.4"/>
<rect x="1971" y="506" width="18" height="6" fill="#fff" stroke="#555" stroke-width="2"/>
<rect x="2015" y="506" width="18" height="18" fill="#fff" stroke="#555" stroke-width="2"/>
<rect x="2015" y="509" width="18" height="2" fill="#555"/>
</svg>
<div class="a" style="left:326px;top:546px;width:1722px;height:940px;background:#c8c8c8;"></div>
<div class="a" style="left:330px;top:552px;width:1278px;height:454px;background:#ebebeb;"></div>
<div class="a" style="left:330px;top:552px;width:1278px;height:46px;background:#f0f0f0;"></div>
<div class="a" style="left:330px;top:598px;width:1278px;height:2px;background:#c4c4c4;"></div>
<div class="a" style="left:330px;top:1006px;width:1278px;height:2px;background:#fff;"></div>
<div class="a" style="left:330px;top:1008px;width:1278px;height:2px;background:#f5f5f5;"></div>
<div class="a" style="left:454px;top:558px;width:2px;height:34px;background:#d2d2d2;"></div>
<div class="a" style="left:454px;top:600px;width:2px;height:406px;background:#c8c8c8;"></div>
<div class="a" style="left:664px;top:558px;width:2px;height:34px;background:#d2d2d2;"></div>
<div class="a" style="left:664px;top:600px;width:2px;height:406px;background:#c8c8c8;"></div>
<div class="a" style="left:714px;top:558px;width:2px;height:34px;background:#d2d2d2;"></div>
<div class="a" style="left:714px;top:600px;width:2px;height:406px;background:#c8c8c8;"></div>
<div class="a" style="left:1376px;top:558px;width:2px;height:34px;background:#d2d2d2;"></div>
<div class="a" style="left:1376px;top:600px;width:2px;height:406px;background:#c8c8c8;"></div>
<div class="a" style="left:330px;top:628px;width:1278px;height:26px;background:#1f66d9;"></div>
<div class="a" style="left:454px;top:628px;width:2px;height:26px;background:#6e9be3;"></div>
<div class="a" style="left:664px;top:628px;width:2px;height:26px;background:#6e9be3;"></div>
<div class="a" style="left:714px;top:628px;width:2px;height:26px;background:#6e9be3;"></div>
<div class="a" style="left:1376px;top:628px;width:2px;height:26px;background:#6e9be3;"></div>
<div class="t" style="left:334px;top:565px;color:#000;">Position</div>
<div class="t" style="left:461px;top:565px;color:#000;">Dokumentblock</div>
<div class="t" style="left:671px;top:565px;color:#000;">Typ</div>
<div class="t" style="left:720px;top:565px;color:#000;">Text-/Bildelement</div>
<div class="t" style="left:1383px;top:565px;color:#000;">Dokumentencode</div>
<svg class="a" style="left:427px;top:568px" width="18" height="12"><path d="M2.5,9.5 L9,3 L15.5,9.5" fill="none" stroke="#222" stroke-width="2.4"/></svg>
<div class="t" style="left:366px;top:605px;color:#000;">1</div>
<div class="t" style="left:461px;top:605px;color:#000;">HeaderAdresse</div>
<div class="t" style="left:671px;top:605px;color:#000;">Text</div>
<div class="t" style="left:720px;top:605px;color:#000;">Adressblock</div>
<svg class="a" style="left:345px;top:636px" width="18" height="16"><path d="M1,1 H17 L9,14 Z" fill="#fff"/></svg>
<div class="t" style="left:366px;top:633px;color:#fff;-webkit-text-stroke:0.3px #fff">2</div>
<div class="t" style="left:461px;top:633px;color:#fff;-webkit-text-stroke:0.3px #fff">BriefText1</div>
<div class="t" style="left:671px;top:633px;color:#fff;-webkit-text-stroke:0.3px #fff">Text</div>
<div class="t" style="left:720px;top:633px;color:#fff;-webkit-text-stroke:0.3px #fff">Brieftext_Korrespondenz</div>
<div class="t" style="left:398px;top:661px;color:#000;">3</div>
<div class="t" style="left:461px;top:661px;color:#000;">BriefText1</div>
<div class="t" style="left:671px;top:661px;color:#000;">Text</div>
<div class="t" style="left:720px;top:661px;color:#000;">__Brieftext_KorrespondenzMop</div>
<div class="t" style="left:366px;top:689px;color:#000;">4</div>
<div class="t" style="left:461px;top:689px;color:#000;">HeaderOrtDatum</div>
<div class="t" style="left:671px;top:689px;color:#000;">Text</div>
<div class="t" style="left:720px;top:689px;color:#000;">HeaderOrtDatum-BriefDatum</div>
<div class="t" style="left:366px;top:717px;color:#000;">5</div>
<div class="t" style="left:461px;top:717px;color:#000;">BriefUnterschriftText1</div>
<div class="t" style="left:671px;top:717px;color:#000;">Text</div>
<div class="t" style="left:720px;top:717px;color:#000;">HtmlStandardBriefUnterschrift_1</div>
<div class="t" style="left:366px;top:745px;color:#000;">6</div>
<div class="t" style="left:461px;top:745px;color:#000;">BriefUnterschriftBild1</div>
<div class="t" style="left:671px;top:745px;color:#000;">Bild</div>
<div class="t" style="left:720px;top:745px;color:#000;">UnterschriftBild</div>
<div class="a" style="left:1608px;top:552px;width:2px;height:456px;background:#fff;"></div>
<div class="a" style="left:1610px;top:550px;width:2px;height:458px;background:#c2c2c2;"></div>
<div class="a" style="left:1612px;top:548px;width:6px;height:462px;background:#fff;"></div>
<div class="a" style="left:1618px;top:550px;width:2px;height:458px;background:#c2c2c2;"></div>
<div class="a" style="left:1608px;top:1008px;width:12px;height:2px;background:#f5f5f5;"></div>
<div class="a" style="left:1620px;top:552px;width:422px;height:456px;background:#fff;"></div>
<div class="a" style="left:1620px;top:1008px;width:426px;height:2px;background:#f5f5f5;"></div>
<div class="a" style="left:1620px;top:552px;width:422px;height:46px;background:#efefef;"></div>
<div class="a" style="left:1620px;top:598px;width:422px;height:2px;background:#c4c4c4;"></div>
<div class="a" style="left:2042px;top:548px;width:2px;height:460px;background:#fff;"></div>
<div class="a" style="left:2044px;top:550px;width:2px;height:458px;background:#f6f6f6;"></div>
<div class="a" style="left:1804px;top:558px;width:2px;height:34px;background:#d2d2d2;"></div>
<div class="a" style="left:1804px;top:600px;width:2px;height:408px;background:#c8c8c8;"></div>
<div class="t" style="left:1625px;top:565px;color:#000;">Attribut</div>
<div class="t" style="left:1810px;top:565px;color:#000;">Wert</div>
<svg class="a" style="left:1777px;top:568px" width="18" height="12"><path d="M2.5,9.5 L9,3 L15.5,9.5" fill="none" stroke="#222" stroke-width="2.4"/></svg>
<div class="a" style="left:326px;top:1010px;width:1722px;height:2px;background:#c2c2c2;"></div>
<div class="a" style="left:326px;top:1012px;width:1722px;height:6px;background:#f4f4f4;"></div>
<div class="a" style="left:326px;top:1018px;width:1722px;height:6px;background:#c5c5c5;"></div>
<div class="a" style="left:330px;top:1024px;width:164px;height:460px;background:#fff;"></div>
<div class="a" style="left:330px;top:1024px;width:164px;height:46px;background:#efefef;"></div>
<div class="a" style="left:330px;top:1068px;width:164px;height:2px;background:#c4c4c4;"></div>
<div class="a" style="left:330px;top:1070px;width:164px;height:28px;background:#dcdcdc;"></div>
<div class="t" style="left:335px;top:1037px;color:#000;">Sprache</div>
<svg class="a" style="left:466px;top:1039px" width="18" height="12"><path d="M2.5,9.5 L9,3 L15.5,9.5" fill="none" stroke="#222" stroke-width="2.4"/></svg>
<div class="t" style="left:334px;top:1077px;color:#333;">d (Std.)</div>
<div class="t" style="left:334px;top:1105px;color:#000;">f</div>
<div class="t" style="left:334px;top:1133px;color:#000;">i</div>
<div class="a" style="left:494px;top:1020px;width:2px;height:464px;background:#fff;"></div>
<div class="a" style="left:496px;top:1020px;width:2px;height:464px;background:#c2c2c2;"></div>
<div class="a" style="left:498px;top:1018px;width:6px;height:466px;background:#fff;"></div>
<div class="a" style="left:504px;top:1020px;width:2px;height:464px;background:#c2c2c2;"></div>
<div class="a" style="left:506px;top:1022px;width:1540px;height:462px;background:#fff;"></div>
<div class="t" style="left:518px;top:1027px;color:#222;">Sprachcode:</div>
<div class="t" style="left:650px;top:1031px;color:#222;font-weight:bold">d</div>
<div class="a" style="left:724px;top:1028px;width:23.5px;height:24px;border:1.5px solid #d4d4d4;border-radius:5px;background:#fff"></div>
<svg class="a" style="left:724px;top:1029px" width="24" height="24"><path d="M5.6,11.3 L10.3,17.5 L18.3,4.9" fill="none" stroke="#9a9a9a" stroke-width="2.4"/></svg>
<div class="t" style="left:758px;top:1031px;color:#b0b0b0;">Standard</div>
<div class="t" style="left:518px;top:1063px;color:#222;font-weight:bold">&lt;fieldref name="SALUTATION"/&gt;</div>
<div class="t" style="left:518px;top:1091px;color:#222;font-weight:bold">Lorem ipsum dolor sit amet, consetetur sadipscing elitr, sed diam nonumy eirmod tempor invidunt ut labore et dolore magna aliquyam erat, sed diam voluptua.</div>
<div class="t" style="left:518px;top:1119px;color:#222;font-weight:bold">At vero eos et accusam et justo duo dolores et ea rebum. Stet clita kasd gubergren, no sea takimata sanctus est Lorem ipsum dolor sit amet.</div>
<div class="t" style="left:518px;top:1175px;color:#222;font-weight:bold">Lorem ipsum dolor sit amet, consetetur sadipscing elitr, sed diam nonumy eirmod tempor invidunt ut labore et dolore magna aliquyam erat, sed diam voluptua.</div>
<div class="t" style="left:518px;top:1203px;color:#222;font-weight:bold">At vero eos et accusam et justo duo dolores et ea rebum. Stet clita kasd gubergren, no sea takimata sanctus est Lorem ipsum dolor sit amet.</div>
<div class="t" style="left:518px;top:1259px;color:#222;font-weight:bold">Lorem ipsum dolor sit amet, consetetur sadipscing elitr, sed diam nonumy eirmod tempor invidunt ut labore et dolore magna aliquyam erat, sed diam voluptua.</div>
<div class="t" style="left:518px;top:1315px;color:#222;font-weight:bold">Freundliche Grüsse</div>
<svg class="a" style="left:1020px;top:630px" width="260" height="140" viewBox="1020 630 260 140">
<path d="M1256,754.5 L1077,672" stroke="#ea4125" stroke-width="9.5"/>
<path d="M1034.5,649.5 L1089.5,648.5 L1068.5,693.5 Z" fill="#ea4125"/>
</svg>
<!-- STATUS BAR -->
<div class="t" style="left:12px;top:1504px;font-size:22px;letter-spacing:0.79px;color:#000">Erfasst: 22.09.20 / mop Geändert: 22.09.20 / mop</div>
<div class="a grip" style="left:1438px;top:1505px;height:28px"></div>
<div class="t" style="left:1452px;top:1507px;font-size:20px;color:#000">Normal / mop</div>
<div class="a grip" style="left:2002px;top:1504px;height:28px"></div>
<svg class="a" style="left:2014px;top:1502px" width="34" height="34"><circle cx="17" cy="16" r="12" fill="none" stroke="#111" stroke-width="2.5"/><rect x="15.5" y="10.5" width="3" height="2.5" fill="#333"/><rect x="15.5" y="14.5" width="3" height="8" fill="#333"/></svg>

</body></html>
